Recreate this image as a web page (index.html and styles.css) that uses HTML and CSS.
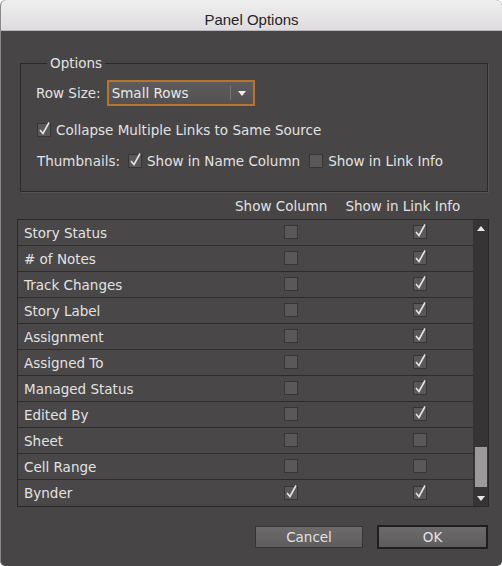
FILE: index.html
```html
<!DOCTYPE html>
<html lang="en">
<head>
    <meta charset="UTF-8">
    <title>Panel Options</title>
    <link rel="stylesheet" href="styles.css">
</head>
<body>
<div class="window">
    <div class="titlebar">Panel Options</div>

    <div class="content">
        <fieldset class="options">
            <legend>Options</legend>

            <div class="opt-row size-row">
                <span>Row Size:</span>
                <div class="dropdown">
                    <span class="dropdown-value">Small Rows</span>
                    <span class="dropdown-arrow"></span>
                </div>
            </div>

            <div class="opt-row check-row">
                <svg class="cb" width="15" height="16" viewBox="0 0 15 16"><rect x="0.5" y="2.5" width="13" height="13" fill="#5a5859" stroke="#373536"/><polyline points="3,9 6,12.5 12,1.5" fill="none" stroke="#e4e4e4" stroke-width="1.6"/></svg>
                <span>Collapse Multiple Links to Same Source</span>
            </div>

            <div class="opt-row thumb-row">
                <span>Thumbnails:</span>
                <svg class="cb" width="15" height="16" viewBox="0 0 15 16"><rect x="0.5" y="2.5" width="13" height="13" fill="#5a5859" stroke="#373536"/><polyline points="3,9 6,12.5 12,1.5" fill="none" stroke="#e4e4e4" stroke-width="1.6"/></svg>
                <span>Show in Name Column</span>
                <svg class="cb cb-gap" width="15" height="16" viewBox="0 0 15 16"><rect x="0.5" y="2.5" width="13" height="13" fill="#5a5859" stroke="#373536"/></svg>
                <span>Show in Link Info</span>
            </div>
        </fieldset>

        <div class="col-heads">
            <span class="head-col">Show Column</span>
            <span class="head-info">Show in Link Info</span>
        </div>

        <div class="table">
            <div class="rows" id="rows"></div>
            <div class="scrollbar">
                <span class="arrow-up"></span>
                <div class="track"><div class="thumb"></div></div>
                <span class="arrow-down"></span>
            </div>
        </div>

        <div class="buttons">
            <button class="btn">Cancel</button>
            <button class="btn btn-default">OK</button>
        </div>
    </div>
</div>

<script>
    const items = [
        ['Story Status', false, true],
        ['# of Notes', false, true],
        ['Track Changes', false, true],
        ['Story Label', false, true],
        ['Assignment', false, true],
        ['Assigned To', false, true],
        ['Managed Status', false, true],
        ['Edited By', false, true],
        ['Sheet', false, false],
        ['Cell Range', false, false],
        ['Bynder', true, true]
    ];

    function box(checked) {
        const tick = checked ? '<polyline points="3,9 6,12.5 12,1.5" fill="none" stroke="#e4e4e4" stroke-width="1.6"/>' : '';
        return '<svg width="15" height="16" viewBox="0 0 15 16"><rect x="0.5" y="2.5" width="13" height="13" fill="#5a5859" stroke="#373536"/>' + tick + '</svg>';
    }

    const rows = document.getElementById('rows');
    items.forEach(item => {
        const row = document.createElement('div');
        row.className = 'row';
        row.innerHTML = '<span class="name">' + item[0] + '</span>' +
            '<span class="cell">' + box(item[1]) + '</span>' +
            '<span class="cell">' + box(item[2]) + '</span>';
        rows.appendChild(row);
    });
</script>
</body>
</html>
```

FILE: styles.css
```css
body {
    margin: 0;
    background: #ffffff;
    font-family: 'DejaVu Sans', sans-serif;
    font-size: 13.5px;
    color: #e2e2e2;
}

.window {
    width: 502px;
    height: 566px;
    background: #474546;
    border-radius: 6px 6px 5px 5px;
    overflow: hidden;
    box-sizing: border-box;
    border-left: 1px solid #8a8889;
}

.titlebar {
    height: 31px;
    box-sizing: border-box;
    padding-top: 11px;
    text-align: center;
    font-family: 'Liberation Sans', Arial, sans-serif;
    font-size: 15px;
    line-height: 17px;
    color: #262626;
    background: linear-gradient(#f0eff0, #dedcde);
    border-bottom: 1px solid #b9b7b9;
}

.content {
    padding: 0 13px 0 16px;
}

.options {
    margin: 24px 1px 0 3px;
    padding: 9px 0 20px 15px;
    border: 1px solid #2b292a;
    box-shadow: 1px 1px 0 #555354;
}

.options legend {
    padding: 0 3px;
    margin-left: 11px;
    line-height: 16px;
}

.opt-row {
    display: flex;
    align-items: center;
    white-space: nowrap;
}

.size-row {
    height: 26px;
}

.dropdown {
    display: flex;
    align-items: center;
    width: 148px;
    height: 26px;
    margin-left: 6px;
    box-sizing: border-box;
    border: 2px solid #b8732c;
    background: linear-gradient(#5d5b5c, #535152);
}

.dropdown-value {
    flex: 1;
    padding-left: 3px;
    color: #e8e8e8;
}

.dropdown-arrow {
    width: 22px;
    height: 14px;
    border-left: 1px solid #767475;
    display: flex;
    justify-content: center;
    align-items: center;
}

.dropdown-arrow::after {
    content: "";
    border-left: 4px solid transparent;
    border-right: 4px solid transparent;
    border-top: 5px solid #eeeeee;
}

.check-row {
    height: 20px;
    margin-top: 14px;
    padding-left: 1px;
}

.thumb-row {
    height: 20px;
    margin-top: 11px;
    padding-left: 1px;
}

.cb {
    margin: -3px 4px 0 0;
}

.thumb-row .cb {
    margin-left: 8px;
}

.thumb-row .cb-gap {
    margin-left: 9px;
}

.col-heads {
    display: flex;
    height: 27px;
    align-items: center;
    padding-top: 1px;
    box-sizing: border-box;
}

.head-col {
    margin-left: 218px;
}

.head-info {
    margin-left: 18px;
}

.table {
    display: flex;
    border: 1px solid #2a2829;
    height: 288px;
    box-sizing: border-box;
}

.rows {
    flex: 1;
}

.row {
    display: grid;
    grid-template-columns: 197px 152px 106px;
    height: 26px;
    box-sizing: border-box;
    align-items: center;
    border-bottom: 1px solid #2e2c2d;
    background: #494748;
}

.row:last-child {
    border-bottom: none;
}

.name {
    padding-left: 6px;
}

.cell {
    display: flex;
    justify-content: center;
    padding-left: 1px;
}

.cell svg {
    margin-top: -3px;
}

.scrollbar {
    width: 16px;
    background: #363435;
    display: flex;
    flex-direction: column;
    align-items: center;
}

.arrow-up, .arrow-down {
    height: 16px;
    display: flex;
    align-items: center;
}

.arrow-up::after {
    content: "";
    border-left: 4px solid transparent;
    border-right: 4px solid transparent;
    border-bottom: 5px solid #e8e8e8;
}

.arrow-down::after {
    content: "";
    border-left: 4px solid transparent;
    border-right: 4px solid transparent;
    border-top: 5px solid #e8e8e8;
}

.track {
    flex: 1;
    display: flex;
    flex-direction: column;
    justify-content: flex-end;
    padding-bottom: 3px;
}

.thumb {
    width: 12px;
    height: 40px;
    background: #9c9a9b;
}

.buttons {
    display: flex;
    justify-content: flex-end;
    align-items: center;
    gap: 14px;
    margin-top: 18px;
    padding-right: 1px;
}

.btn {
    width: 108px;
    height: 22px;
    font-family: 'DejaVu Sans', sans-serif;
    font-size: 13.5px;
    color: #e2e2e2;
    background: linear-gradient(#6c6a6b, #5e5c5d);
    border: 1px solid #363435;
    padding: 0;
}

.btn-default {
    width: 111px;
    height: 24px;
    border: 2px solid #1f1d1e;
}
```
